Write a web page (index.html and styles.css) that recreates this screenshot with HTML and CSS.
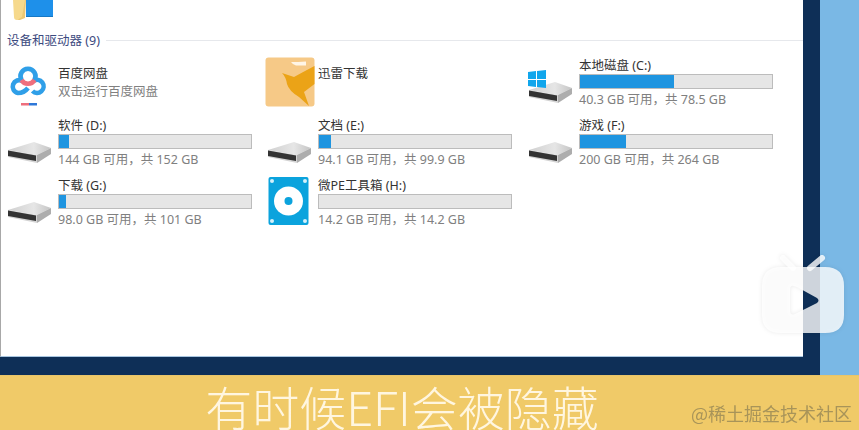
FILE: index.html
```html
<!DOCTYPE html>
<html lang="zh-CN">
<head>
<meta charset="utf-8">
<title>有时候EFI会被隐藏</title>
<link rel="stylesheet" href="styles.css">
</head>
<body>
<div class="stage">
  <div class="desktop">
    <div class="frame">
      <main class="window">
        <div class="recent">
          <svg width="40" height="21" viewBox="0 0 40 21"><path d="M0 0H12V4L12 17L4 20Q1 20 1 17Z" fill="#f6d98c"/><path d="M12 0H13L12 18L7 20H4L9 17Z" fill="#edc873"/><path d="M13 0H40V17H13Z" fill="#1e90ea"/><path d="M13 16H40V17H13Z" fill="#1678c4"/></svg>
        </div>
        <div class="group-head"><span class="group-title">设备和驱动器 (9)</span><span class="group-rule"></span></div>
        <div class="tiles">
          <div class="tile">
            <div class="tile-icon icon-baidu">
              <svg width="46" height="46" viewBox="6 63 46 46"><path d="M22.500 81A6.500 6.500 0 1 0 18 93Q24 93 28 88" fill="none" stroke="#2f9fe8" stroke-width="4.600"/><path d="M33.500 81A6.500 6.500 0 1 1 32.500 91" fill="none" stroke="#2f9fe8" stroke-width="4.600"/><path d="M21.500 80A7.500 7.500 0 1 1 34.500 80" fill="none" stroke="#2f9fe8" stroke-width="4.600"/><path d="M21.500 80A7.500 7.500 0 0 0 34.500 80" fill="none" stroke="#ee6f7d" stroke-width="4.600"/><rect x="21" y="103" width="8" height="2.500" fill="#ee6f7d"/><rect x="29" y="103" width="8" height="2.500" fill="#2f78d8"/></svg>
            </div>
            <div class="tile-text tile-text-app"><div class="name">百度网盘</div><div class="sub">双击运行百度网盘</div></div>
          </div>
          <div class="tile">
            <div class="tile-icon icon-xunlei">
              <svg width="50" height="50" viewBox="0 0 50 50"><rect x="0.500" y="0.500" width="49" height="49" rx="3" fill="#f6c987"/><path d="M26 5Q33 5 41 4.500V8.500H31Q28 8 26 5Z" fill="#fff5e6"/><path d="M17 16L23 18L29 20Q38 15 49.500 9V27L39 35L44 49L34 40Q24 34 22 27Q21 20 17 16Z" fill="#eba317"/></svg>
            </div>
            <div class="tile-text tile-text-app"><div class="name">迅雷下载</div></div>
          </div>
          <div class="tile">
            <div class="tile-icon icon-system">
              <svg width="45" height="33" viewBox="-1 0 45 33"><use href="#disk" y="12"/><path d="M-1 2L7 1V9H-1ZM8 1L17 0V9H8ZM-1 10H7V17L-1 16ZM8 10H17V18L8 17Z" fill="#11a6ec"/></svg>
            </div>
            <div class="tile-text">
              <div class="name">本地磁盘 (C:)</div>
              <div class="bar"><div class="fill" style="width:48.700%"></div></div>
              <div class="sub">40.3 GB 可用，共 78.5 GB</div>
            </div>
          </div>

          <div class="tile">
            <div class="tile-icon icon-disk"><svg width="44" height="21" viewBox="0 0 44 21"><use href="#disk"/></svg></div>
            <div class="tile-text">
              <div class="name">软件 (D:)</div>
              <div class="bar"><div class="fill" style="width:5%"></div></div>
              <div class="sub">144 GB 可用，共 152 GB</div>
            </div>
          </div>
          <div class="tile">
            <div class="tile-icon icon-disk"><svg width="44" height="21" viewBox="0 0 44 21"><use href="#disk"/></svg></div>
            <div class="tile-text">
              <div class="name">文档 (E:)</div>
              <div class="bar"><div class="fill" style="width:6.200%"></div></div>
              <div class="sub">94.1 GB 可用，共 99.9 GB</div>
            </div>
          </div>
          <div class="tile">
            <div class="tile-icon icon-disk"><svg width="44" height="21" viewBox="0 0 44 21"><use href="#disk"/></svg></div>
            <div class="tile-text">
              <div class="name">游戏 (F:)</div>
              <div class="bar"><div class="fill" style="width:24%"></div></div>
              <div class="sub">200 GB 可用，共 264 GB</div>
            </div>
          </div>

          <div class="tile">
            <div class="tile-icon icon-disk"><svg width="44" height="21" viewBox="0 0 44 21"><use href="#disk"/></svg></div>
            <div class="tile-text">
              <div class="name">下载 (G:)</div>
              <div class="bar"><div class="fill" style="width:3.500%"></div></div>
              <div class="sub">98.0 GB 可用，共 101 GB</div>
            </div>
          </div>
          <div class="tile">
            <div class="tile-icon icon-pe">
              <svg width="42" height="48" viewBox="0 0 42 48"><rect x="0.500" y="0" width="40" height="48" rx="2" fill="#0ba3dd"/><circle cx="4" cy="4" r="2" fill="#d5f0fa"/><circle cx="37" cy="4" r="2" fill="#d5f0fa"/><circle cx="4" cy="44" r="2" fill="#d5f0fa"/><circle cx="37" cy="44" r="2" fill="#d5f0fa"/><circle cx="20.500" cy="24" r="14.500" fill="#fff"/><circle cx="20.500" cy="24" r="4" fill="#0ba3dd"/></svg>
            </div>
            <div class="tile-text">
              <div class="name">微PE工具箱 (H:)</div>
              <div class="bar"></div>
              <div class="sub">14.2 GB 可用，共 14.2 GB</div>
            </div>
          </div>
        </div>
      </main>
    </div>
    <div class="backdrop"></div>
  </div>
  <footer class="caption">
    <span class="caption-text">有时候EFI会被隐藏</span>
    <span class="watermark">@稀土掘金技术社区</span>
  </footer>
  <svg class="tv-logo" width="84" height="80" viewBox="0 0 84 80"><path d="M22 3L32 13M61 3L49 13" stroke="#fff" stroke-width="6" stroke-linecap="round" fill="none" opacity=".8"/><path fill-rule="evenodd" d="M20 12H64Q83 12 83 31V60Q83 78 64 78H20Q1 78 1 60V31Q1 12 20 12ZM33 31Q29 30 29 35V55Q29 61 34 59L56 48Q59 45.500 56 43L36 32Z" fill="#fff" opacity=".8"/></svg>
</div>
<svg class="defs" width="0" height="0">
  <defs>
    <linearGradient id="disktop" x1="0" x2="1" y1="0" y2="0"><stop offset="0" stop-color="#d0d0d0"/><stop offset=".6" stop-color="#e6e6e6"/><stop offset="1" stop-color="#c4c4c4"/></linearGradient>
    <g id="disk">
      <path d="M0 8L26 0L43 6L29 13Z" fill="url(#disktop)"/>
      <path d="M0 8L29 13V21L0 15Z" fill="#d4d4d4"/>
      <path d="M0 8.500L28 13.500V19L0 14Z" fill="#333"/>
      <path d="M29 13L43 6V12L29 21Z" fill="#adadad"/>
    </g>
  </defs>
</svg>
</body>
</html>
```
FILE: styles.css
```css
* { box-sizing: border-box; }
html, body { margin: 0; padding: 0; }
body { width: 859px; height: 430px; overflow: hidden; background: #fff; }

.stage {
  position: relative;
  width: 859px;
  height: 430px;
  display: flex;
  flex-direction: column;
  font-family: "Noto Sans", "Noto Sans CJK SC", sans-serif;
  filter: blur(0.35px);
}

.desktop { display: flex; height: 375px; flex: none; background: #7ab8e5; }
.frame { width: 820px; flex: none; background: #0e2f57; padding: 0 17px 18px 0; }
.backdrop { flex: 1; }

.window {
  height: 100%;
  background: #fff;
  border-left: 1px solid #a8a8a8;
  border-bottom: 1px solid #a9c6e0;
  overflow: hidden;
}

.recent { height: 30px; padding-left: 12px; }
.recent svg { display: block; }

.group-head { display: flex; align-items: center; gap: 6px; height: 20px; padding-left: 6px; }
.group-title { font-size: 12.500px; line-height: 20px; color: #3c4a80; margin-top: 2px; }
.group-rule { flex: 1; height: 1px; background: #e6e8ec; }

.tiles {
  display: grid;
  grid-template-columns: 260px 261px 1fr;
  grid-auto-rows: 60px;
  margin-top: 4px;
}

.tile { display: flex; }
.tile-icon { width: 57px; flex: none; padding: 0 0 0 7px; }
.tile-icon svg { display: block; }
.icon-disk { padding-top: 28px; }
.icon-baidu { padding: 9px 0 0 5px; }
.icon-xunlei { padding: 3px 0 0 4px; }
.icon-pe { padding: 3px 0 0 7px; }
.icon-system { padding: 16px 0 0 6px; }

.tile-text { width: 194px; padding-top: 3px; }
.tile-text-app { padding-top: 11px; }

.name { font-size: 12.500px; line-height: 17px; color: #333; white-space: nowrap; }
.sub { font-size: 12.500px; line-height: 18px; color: #808080; white-space: nowrap; }
.tile-text-app .sub { margin-top: 1px; }

.bar {
  height: 15px;
  background: #e6e6e6;
  border: 1px solid #bcbcbc;
  margin-bottom: 2px;
}
.fill { height: 100%; background: #1f95e0; }

.caption {
  position: relative;
  flex: 1;
  background: #f0ca68;
  border-top: 1px solid #e8c56a;
  display: flex;
  justify-content: center;
  padding: 8px 55px 0 0;
  font-family: "Noto Sans CJK SC", sans-serif;
}
.caption-text {
  font-size: 47px;
  line-height: 44px;
  font-weight: 300;
  color: #fff6e0;
  white-space: nowrap;
}
.watermark {
  position: absolute;
  right: 7px;
  top: 25px;
  font-size: 18px;
  line-height: 24px;
  color: #a89459;
  white-space: nowrap;
}

.tv-logo {
  position: absolute;
  left: 761px;
  top: 255px;
  filter: drop-shadow(0 0 2px rgba(0, 0, 0, 0.1));
}
.defs { position: absolute; }
```
